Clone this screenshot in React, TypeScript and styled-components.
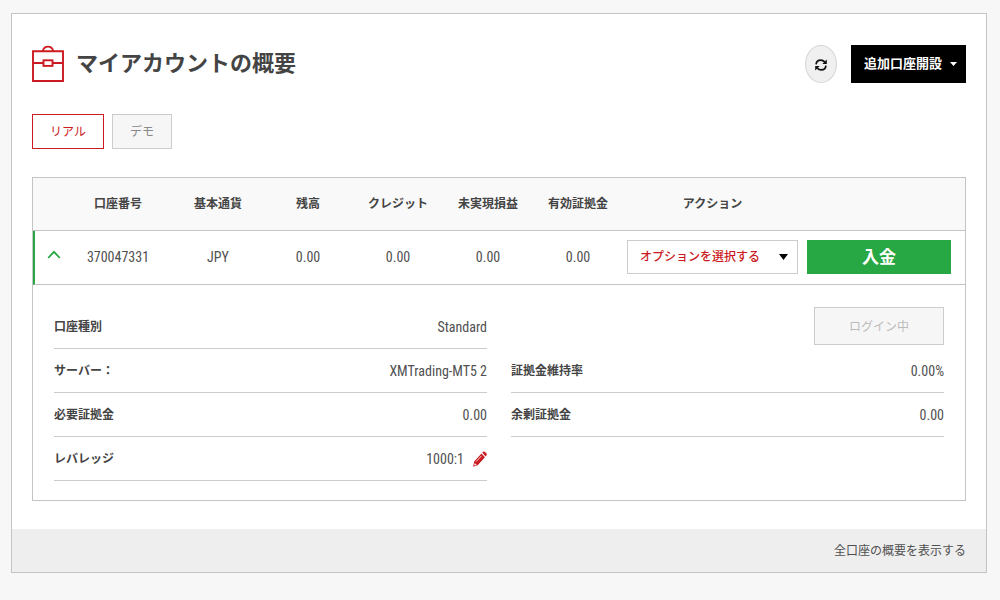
import React from "react";
import styled, { createGlobalStyle, css } from "styled-components";

const line = "#c4c4c4";
const red = "#cb1a22";
const green = "#28a745";
const ink = "#444";
const muted = "#505050";

const GlobalStyle = createGlobalStyle`
  *, *::before, *::after { box-sizing: border-box; }
  body {
    margin: 0;
    background: #f7f7f7;
    color: ${ink};
    font: 12px/20px "Roboto Condensed", Roboto, "Noto Sans CJK JP", sans-serif;
  }
  button, select { font: inherit; cursor: pointer; }
  svg { display: block; }
`;

const Page = styled.main`
  padding: 13px 13px 27px 11px;
`;

const Card = styled.section`
  background: #fff;
  border: 1px solid ${line};
`;

const CardBody = styled.div`
  padding: 31px 20px 28px;
`;

const Header = styled.header`
  display: flex;
  align-items: center;
  justify-content: space-between;
`;

const TitleGroup = styled.div`
  display: flex;
  align-items: center;
  gap: 12px;
`;

const Title = styled.h1`
  margin: 0;
  font-size: 22px;
  line-height: 38px;
  font-weight: 700;
`;

const HeaderActions = styled.div`
  display: flex;
  gap: 14px;
`;

const RefreshButton = styled.button`
  display: grid;
  place-items: center;
  width: 32px;
  height: 38px;
  padding: 2px 0 0;
  border: 1px solid #d4d4d4;
  border-radius: 50%;
  background: #f0f0f0;
  color: #111;
`;

const OpenAccountButton = styled.button`
  display: flex;
  align-items: center;
  gap: 8px;
  height: 38px;
  padding: 0 9px 0 13px;
  border: 0;
  background: #000;
  color: #fff;
  font-size: 13px;
  font-weight: 700;
`;

const Tabs = styled.div`
  display: flex;
  gap: 8px;
  margin: 31px 0 28px;
`;

const Tab = styled.button<{ $active?: boolean }>`
  height: 35px;
  padding: 1px 17px 0;
  border: 1px solid #ccc;
  background: #f6f6f6;
  color: #888;
  ${(p) =>
    p.$active &&
    css`
      border-color: ${red};
      background: #fff;
      color: ${red};
    `}
`;

const AccountBox = styled.div`
  border: 1px solid ${line};
`;

const Table = styled.table`
  width: 100%;
  table-layout: fixed;
  border-collapse: separate;
  border-spacing: 0;
`;

const Th = styled.th`
  height: 53px;
  padding: 0;
  border-bottom: 1px solid ${line};
  background: #f9f9f9;
  font-weight: 700;
  text-align: center;
`;

const Td = styled.td`
  height: 54px;
  padding: 0 4px 2px;
  border-bottom: 1px solid ${line};
  color: ${muted};
  font-size: 14px;
  text-align: center;
`;

const ToggleCell = styled(Td)`
  padding: 0 0 6px 10px;
  border-left: 2px solid ${green};
`;

const DepositCell = styled(Td)`
  padding: 0 14px 2px 5px;
`;

const ToggleButton = styled.button`
  display: block;
  width: 18px;
  padding: 2px;
  border: 0;
  background: none;
  color: ${green};
`;

const SelectWrap = styled.div`
  position: relative;
`;

const Select = styled.select`
  display: block;
  width: 100%;
  height: 34px;
  padding: 0 24px 0 12px;
  appearance: none;
  border: 1px solid #ccc;
  border-radius: 0;
  background: #fff;
  color: ${red};
  font-size: 12px;
  font-weight: 500;
`;

const SelectArrow = styled.svg`
  position: absolute;
  top: 14px;
  right: 10px;
  pointer-events: none;
`;

const DepositButton = styled.button`
  display: block;
  width: 100%;
  height: 34px;
  padding: 0;
  border: 0;
  background: ${green};
  color: #fff;
  font-size: 17px;
  font-weight: 700;
`;

const Details = styled.div`
  display: grid;
  grid-template-columns: 1fr 1fr;
  column-gap: 24px;
  padding: 20px 21px 19px;
`;

const DetailList = styled.dl`
  margin: 0;
`;

const DetailRow = styled.div`
  display: flex;
  align-items: center;
  justify-content: space-between;
  height: 44px;
  border-bottom: 1px solid #ccc;
`;

const Term = styled.dt`
  font-weight: 700;
`;

const Value = styled.dd`
  display: flex;
  align-items: center;
  gap: 9px;
  margin: 0;
  color: ${muted};
  font-size: 14px;
`;

const LoginRow = styled.div`
  display: flex;
  align-items: flex-start;
  justify-content: flex-end;
  height: 44px;
  padding-top: 2px;
`;

const LoginButton = styled.button`
  width: 130px;
  height: 38px;
  padding: 1px 0 0;
  border: 1px solid #ccc;
  background: #f6f6f6;
  color: #bbb;
`;

const IconButton = styled.button`
  display: block;
  padding: 0;
  border: 0;
  background: none;
  color: ${red};
`;

const Footer = styled.footer`
  display: flex;
  align-items: center;
  justify-content: flex-end;
  height: 43px;
  padding: 0 20px;
  background: #eee;
`;

const FooterLink = styled.a`
  color: ${muted};
  text-decoration: none;
`;

const BriefcaseIcon = () => (
  <svg width="32" height="38" viewBox="0 0 32 38" fill="none" stroke={red} strokeWidth="1.9" aria-hidden="true">
    <path d="M1 6.2H31V36H1Z M1 18H11.500M20.500 18H31" />
    <rect x="11.5" y="15.3" width="9" height="5.600" />
    <path d="M10.800 6C11.400 3.200 13.500 1.600 16 1.600C18.500 1.600 20.600 3.200 21.200 6" />
  </svg>
);

const RefreshIcon = () => (
  <svg width="12" height="12" viewBox="0 0 12 12" fill="none" stroke="currentColor" strokeWidth="1.700" aria-hidden="true">
    <path d="M1.100 5.400C1.300 2.800 3.300 1.100 5.800 1.100C7.400 1.100 8.600 1.700 9.700 2.900" />
    <path d="M10.900 6.600C10.700 9.200 8.700 10.900 6.200 10.900C4.600 10.900 3.400 10.300 2.300 9.100" />
    <path d="M11.800 .4V4.900H7.300Z M.2 11.600V7.100H4.700Z" fill="currentColor" stroke="none" />
  </svg>
);

const PencilIcon = () => (
  <svg width="14" height="16" viewBox="0 0 14 16" aria-hidden="true">
    <path
      d="M9.300 1.500L10.200 .7Q11.100 .1 12 .9L13.300 2.300Q14.200 3.300 13.400 4.400L12.600 5.400ZM8.500 2.400L11.900 6.300L4.700 14.200L.2 15.700L1.200 10.500Z"
      fill="currentColor"
    />
    <path d="M3.300 10.500L8.400 4.900" stroke="#fff" strokeWidth=".8" />
    <path d="M1.800 12.100L3.700 14L1.800 14.600L1.300 14.100Z" fill="#fff" />
  </svg>
);

const columns = ["口座番号", "基本通貨", "残高", "クレジット", "未実現損益", "有効証拠金", "アクション"];
const columnWidths = [30, 110, 90, 90, 90, 90, 90, 179, 163];
const cells = ["370047331", "JPY", "0.00", "0.00", "0.00", "0.00"];

const Detail = ({ label, children }: { label: string; children: React.ReactNode }) => (
  <DetailRow>
    <Term>{label}</Term>
    <Value>{children}</Value>
  </DetailRow>
);

export default function App() {
  return (
    <>
      <GlobalStyle />
      <Page lang="ja">
        <Card>
          <CardBody>
            <Header>
              <TitleGroup>
                <BriefcaseIcon />
                <Title>マイアカウントの概要</Title>
              </TitleGroup>
              <HeaderActions>
                <RefreshButton aria-label="更新">
                  <RefreshIcon />
                </RefreshButton>
                <OpenAccountButton>
                  追加口座開設
                  <svg width="7" height="4" viewBox="0 0 7 4" fill="currentColor" aria-hidden="true">
                    <path d="M0 0H7L3.500 4Z" />
                  </svg>
                </OpenAccountButton>
              </HeaderActions>
            </Header>

            <Tabs>
              <Tab $active aria-pressed="true">リアル</Tab>
              <Tab aria-pressed="false">デモ</Tab>
            </Tabs>

            <AccountBox>
              <Table>
                <colgroup>
                  {columnWidths.map((width, i) => (
                    <col key={i} width={width} />
                  ))}
                </colgroup>
                <thead>
                  <tr>
                    <Th />
                    {columns.map((name) => (
                      <Th key={name} scope="col">{name}</Th>
                    ))}
                    <Th />
                  </tr>
                </thead>
                <tbody>
                  <tr>
                    <ToggleCell>
                      <ToggleButton aria-label="詳細" aria-expanded="true">
                        <svg width="14" height="9" viewBox="0 0 14 9" fill="none" stroke="currentColor" strokeWidth="1.800" aria-hidden="true">
                          <path d="M1.200 8L7 1.800L12.800 8" />
                        </svg>
                      </ToggleButton>
                    </ToggleCell>
                    {cells.map((value, i) => (
                      <Td key={i}>{value}</Td>
                    ))}
                    <Td>
                      <SelectWrap>
                        <Select aria-label="アクション" defaultValue="">
                          <option value="">オプションを選択する</option>
                        </Select>
                        <SelectArrow width="9" height="6" viewBox="0 0 9 6" aria-hidden="true">
                          <path d="M0 0H9L4.500 6Z" fill="#000" />
                        </SelectArrow>
                      </SelectWrap>
                    </Td>
                    <DepositCell>
                      <DepositButton>入金</DepositButton>
                    </DepositCell>
                  </tr>
                </tbody>
              </Table>

              <Details>
                <DetailList>
                  <Detail label="口座種別">Standard</Detail>
                  <Detail label="サーバー：">XMTrading-MT5 2</Detail>
                  <Detail label="必要証拠金">0.00</Detail>
                  <Detail label="レバレッジ">
                    1000:1
                    <IconButton aria-label="レバレッジを変更">
                      <PencilIcon />
                    </IconButton>
                  </Detail>
                </DetailList>
                <div>
                  <LoginRow>
                    <LoginButton>ログイン中</LoginButton>
                  </LoginRow>
                  <DetailList>
                    <Detail label="証拠金維持率">0.00%</Detail>
                    <Detail label="余剰証拠金">0.00</Detail>
                  </DetailList>
                </div>
              </Details>
            </AccountBox>
          </CardBody>
          <Footer>
            <FooterLink href="#">全口座の概要を表示する</FooterLink>
          </Footer>
        </Card>
      </Page>
    </>
  );
}
